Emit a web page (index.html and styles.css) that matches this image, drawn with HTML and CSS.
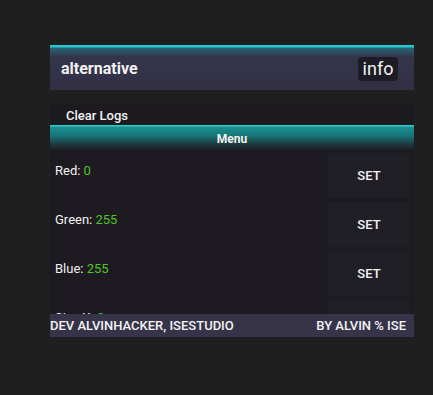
FILE: index.html
```html
<!DOCTYPE html>
<html lang="en">
<head>
    <meta charset="UTF-8">
    <meta name="viewport" content="width=device-width, initial-scale=1.0">
    <title>alternative</title>
    <link rel="stylesheet" href="styles.css">
</head>
<body>

<div class="panel">
    <div class="header">
        <span class="title">alternative</span>
        <span class="info">info</span>
    </div>

    <div class="logs">Clear Logs</div>

    <div class="menu-bar">Menu</div>

    <div class="content">
        <div class="row">
            <div class="label">Red: <span class="val">0</span></div>
            <button class="set-btn">SET</button>
        </div>
        <div class="row">
            <div class="label">Green: <span class="val">255</span></div>
            <button class="set-btn">SET</button>
        </div>
        <div class="row">
            <div class="label">Blue: <span class="val">255</span></div>
            <button class="set-btn">SET</button>
        </div>
        <div class="row">
            <div class="label">Size X: <span class="val">0</span></div>
            <button class="set-btn">SET</button>
        </div>
    </div>

    <div class="footer">
        <span>DEV ALVINHACKER, ISESTUDIO</span>
        <span>BY ALVIN % ISE</span>
    </div>
</div>

</body>
</html>
```

FILE: styles.css
```css
body {
    margin: 0;
    padding: 0;
    background-color: #1f1f1f;
    font-family: Roboto, "Liberation Sans", sans-serif;
    color: #f2f2f2;
}
.panel {
    width: 364px;
    margin: 45px 0 0 50px;
}
.header {
    height: 45px;
    display: flex;
    align-items: center;
    justify-content: space-between;
    padding: 0 16px 0 11px;
    background: linear-gradient(#22c9cf 0, #22c9cf 2px, #276571 3px, #33354b 12px, #332f45 100%);
}
.title {
    font-size: 16px;
    font-weight: bold;
    margin-top: 2px;
}
.info {
    font-size: 18px;
    background: #1d1c24;
    border-radius: 4px;
    width: 40px;
    height: 24px;
    line-height: 24px;
    text-align: center;
    margin-top: 2px;
}
.logs {
    margin-top: 14px;
    height: 21px;
    line-height: 23px;
    padding-left: 16px;
    font-size: 13px;
    font-weight: 500;
    background: #1c1a1f;
}
.menu-bar {
    height: 25px;
    line-height: 28px;
    text-align: center;
    font-size: 12px;
    font-weight: bold;
    background: linear-gradient(#2ccbcc 0, #2ccbcc 1px, #1b9090 2px, #18797b 10px, #1e3a40 19px, #1e1f26 25px);
}
.content {
    height: 164px;
    overflow: hidden;
    background: #1d1a21;
    padding-top: 3px;
    box-sizing: border-box;
}
.row {
    display: flex;
    justify-content: space-between;
    height: 45px;
    margin-bottom: 4px;
}
.label {
    font-size: 13px;
    padding: 10px 0 0 5px;
}
.val {
    color: #4fc424;
}
.set-btn {
    width: 82px;
    margin-right: 4px;
    border: none;
    background: #211f26;
    color: #f2f2f2;
    font-family: Roboto, "Liberation Sans", sans-serif;
    font-size: 13px;
    font-weight: 500;
}
.footer {
    height: 23px;
    display: flex;
    align-items: center;
    justify-content: space-between;
    padding: 0 8px 0 0;
    background: #37344a;
    font-size: 13px;
    font-weight: 500;
}
```
